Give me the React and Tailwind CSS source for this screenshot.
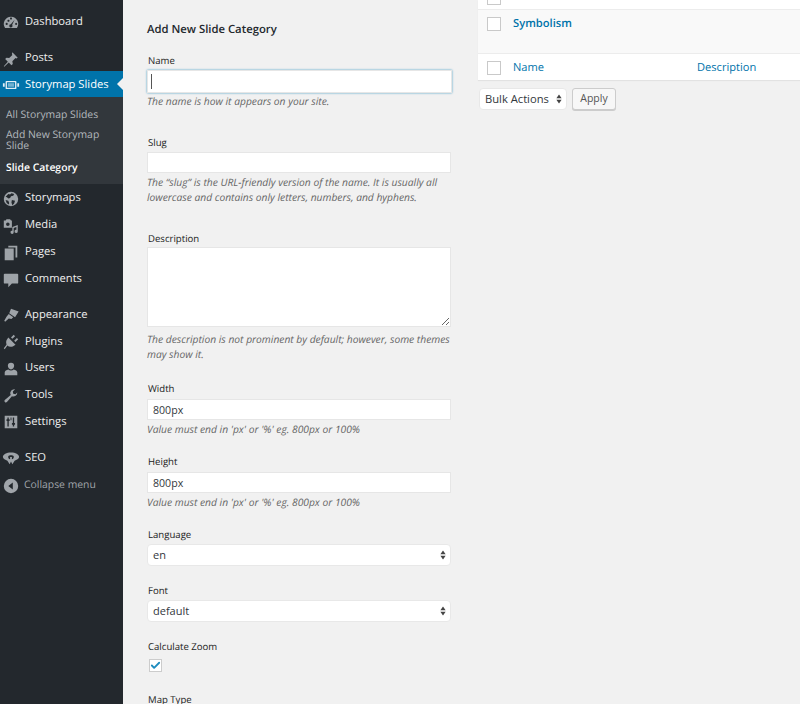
import { Check } from 'lucide-react'

const FONT = "font-['Open_Sans',sans-serif] [text-rendering:geometricPrecision]"

// hand drawn, dashicons are not in any of the icon packs
const ICONS = {
  dashboard: <path fillRule="evenodd" d="M10 3a8 8 0 0 0-6.6 12.5h13.2A8 8 0 0 0 10 3zM6 7.5a1.2 1.2 0 1 1 0 .01zM9 5.5a1.1 1.1 0 1 1 2 0 1.1 1.1 0 0 1-2 0zM4 11a1.2 1.2 0 1 1 2.4 0A1.2 1.2 0 0 1 4 11zm10-4.5L11.3 12a1.8 1.8 0 1 1-1.5-.7zM14.5 11a1.2 1.2 0 1 1 0 .01z" />,
  pin: <path d="M11.5 2.5l6 6-1.5 1-1-.5-3.5 3.5.5 3-1.5 1.5-3-3-5 4.5-.5-.5 4.5-5-3-3L5 8.5l3 .5 3.5-3.5-.5-1z" />,
  slides: (
    <>
      <path fillRule="evenodd" d="M5 5.500h10a1 1 0 0 1 1 1v7a1 1 0 0 1-1 1H5a1 1 0 0 1-1-1v-7a1 1 0 0 1 1-1zm.5 1.500v6h9V7zM1 8h2v4H1zm16 0h2v4h-2z" />
      <rect x="6.500" y="8" width="7" height="4" opacity="0.5" />
    </>
  ),
  globe: <path fillRule="evenodd" d="M10 2a8 8 0 1 0 0 16 8 8 0 0 0 0-16zM7 4.5l2 .5 1.5-1.5 3 1-1 2-2.500.5-1 2-2 .5-1.500-1.500L4 7.500zM11 11l3.500 1-1 3-2 2-1-3zM4 11l3 1 1 2.500-.5 1.500A6.500 6.500 0 0 1 4 11z" />,
  media: <path fillRule="evenodd" d="M2 4h2l1-1.500h4L10 4h1v8H2zM6.500 6a2 2 0 1 0 0 4 2 2 0 0 0 0-4zM17.500 9v7a1.800 1.800 0 1 1-1.500-1.800v-3l-3 1V17a1.800 1.800 0 1 1-1.500-1.800V11z" />,
  pages: <path d="M7 2h10v13h-2V4H7zM3 5h10v13H3z" />,
  comments: <path d="M3 3h14a1 1 0 0 1 1 1v9a1 1 0 0 1-1 1h-6l-4 4v-4H3a1 1 0 0 1-1-1V4a1 1 0 0 1 1-1z" />,
  appearance: <path d="M10 3l8.500 3-4 6.500-6.500-4.500zM7.500 9l5 3.500-2 2-3-.5-4 3.500-1-1 2.500-4.500z" />,
  plugins: <path d="M7 5l8 8-3 2q-4 1-6-1l-3 4-1-1 3-4q-1-3 0-5zM10 5l3-3 1.500 1.500-3 3zM13.500 8.500l3-3L18 7l-3 3z" />,
  users: <path fillRule="evenodd" d="M10 3a3.500 3.500 0 0 1 3.500 3.500c0 2-1.500 4-3.500 4s-3.500-2-3.500-4A3.500 3.500 0 0 1 10 3zM7 10.500c1.500 1.500 4.500 1.500 6 0 2 .5 4 1.500 4 3.500v3H3v-3c0-2 2-3 4-3.500z" />,
  tools: <path d="M17 6a4.500 4.500 0 0 1-6 4.300L5.500 16.800a1.700 1.700 0 0 1-2.400-2.400L9.700 9A4.500 4.500 0 0 1 14.500 2.500l-2.500 2.500.5 2.500 2.500.5 2.500-2.500z" />,
  settings: <path fillRule="evenodd" d="M3 3h14v14H3zm3 2v2H5v2h1v6h1.500V9h1V7h-1V5zm6 0v6h-1v2h1v2h1.500v-2h1v-2h-1V5zM9.500 5v3h1V5z" />,
  seo: <path fillRule="evenodd" d="M10 4c5 0 9 2 9 5 0 2-3 3.500-5 4l-2.500 4L10 14l-1.500 3L6 13c-2-.5-5-2-5-4 0-3 4-5 9-5zM7 8c-.5 1.500.500 3 2 3.500V9h2v2.500c1.500-.5 2.500-2 2-3.500-1-1.500-5-1.500-6 0z" />,
  collapse: <path fillRule="evenodd" d="M10 2a8 8 0 1 1 0 16 8 8 0 0 1 0-16zm2 4L7 10l5 4z" />,
}

function MenuIcon({ name, color = 'text-[#9ea3a8]' }) {
  return (
    <svg viewBox="0 0 20 20" fill="currentColor" className={`size-[18px] shrink-0 ${color}`}>
      {ICONS[name]}
    </svg>
  )
}

function MenuItem({ icon, label, height = 'h-[27px]' }) {
  return (
    <a className={`flex ${height} items-center gap-[5px] pl-[2px] pt-[2px] text-[11.2px] text-[#eeeeee]`}>
      <MenuIcon name={icon} />
      <span>{label}</span>
    </a>
  )
}

function Sidebar() {
  return (
    <aside className="relative w-[123px] shrink-0 bg-[#23282d] pt-[8px]">
      <MenuItem icon="dashboard" label="Dashboard" />
      <div className="mt-[9px]">
        <MenuItem icon="pin" label="Posts" />
      </div>
      <div className="relative flex h-[26px] items-center gap-[5px] bg-[#0073aa] pl-[2px] pt-[2px] text-[11.2px] text-white">
        <MenuIcon name="slides" color="text-[#e4eff5]" />
        <span className="whitespace-nowrap">Storymap Slides</span>
        <span className="absolute right-0 top-[7px] border-y-[6px] border-r-[6px] border-y-transparent border-r-[#f1f1f1]" />
      </div>
      <div className="flex h-[87px] flex-col bg-[#32373c] px-[6px] pt-[11px] text-[10.4px] leading-[12px] text-[#b4b9be]">
        <a className="mb-[9px] mt-px">All Storymap Slides</a>
        <a className="mb-[10px] leading-[11px]">Add New Storymap Slide</a>
        <a className="font-semibold text-white">Slide Category</a>
      </div>
      <MenuItem icon="globe" label="Storymaps" />
      <MenuItem icon="media" label="Media" />
      <MenuItem icon="pages" label="Pages" />
      <MenuItem icon="comments" label="Comments" />
      <div className="mt-[9px]">
        <MenuItem icon="appearance" label="Appearance" height="h-[26.75px]" />
        <MenuItem icon="plugins" label="Plugins" height="h-[26.75px]" />
        <MenuItem icon="users" label="Users" height="h-[26.75px]" />
        <MenuItem icon="tools" label="Tools" height="h-[26.75px]" />
        <MenuItem icon="settings" label="Settings" height="h-[26.75px]" />
      </div>
      <div className="mt-[9px]">
        <MenuItem icon="seo" label="SEO" />
      </div>
      <a className="flex h-[27px] items-center gap-[4px] pl-[2px] pt-[3px] text-[10.4px] text-[#a0a5aa]">
        <MenuIcon name="collapse" color="text-[#a0a5aa]" />
        <span>Collapse menu</span>
      </a>
    </aside>
  )
}

const inputClass = 'block w-[304px] border border-[#e6e6e6] bg-white px-[5px] text-[10.6px] text-[#32373c] outline-none'

function Label({ children, className = '' }) {
  return <label className={`-mb-[2px] block pl-px text-[9.6px] leading-[18px] text-[#222] ${className}`}>{children}</label>
}

function Help({ children, className = '' }) {
  return <p className={`text-[10.25px] italic leading-[15px] text-[#666] ${className}`}>{children}</p>
}

function Dropdown({ value }) {
  return (
    <div className="relative mt-[2px] w-[304px]">
      <select
        defaultValue={value}
        className="block h-[22px] w-full appearance-none rounded-[4px] border border-[#e8e8e8] bg-white pl-[5px] text-[11px] text-[#32373c] outline-none"
      >
        <option>{value}</option>
      </select>
      <svg viewBox="0 0 8 12" fill="#444" className="absolute right-[5px] top-[6px] h-[10px] w-[6px]">
        <path d="M4 0l3.500 5h-7zM4 12L.5 7h7z" />
      </svg>
    </div>
  )
}

function AddForm() {
  return (
    <section className="w-[331px] shrink-0 pl-[24px] pt-[21px]">
      <h2 className="text-[11.3px] font-semibold leading-[18px] text-[#23282d]">Add New Slide Category</h2>

      <Label className="mt-[13px]">Name</Label>
      <div className="relative mt-[2px] w-[305px]">
        <input
          type="text"
          className={`${inputClass} h-[23px] w-full border-[#7ab4dc] shadow-[0_0_2px_rgba(30,140,190,0.8)]`}
        />
        <span className="absolute left-[4px] top-[4px] h-[15px] w-px bg-[#555]" />
      </div>
      <Help className="mt-[2px]">The name is how it appears on your site.</Help>

      <Label className="mt-[24px]">Slug</Label>
      <input type="text" className={`${inputClass} mt-[2px] h-[21px]`} />
      <Help className="mt-[3px]">The “slug” is the URL-friendly version of the name. It is usually all lowercase and contains only letters, numbers, and hyphens.</Help>

      <Label className="mt-[24px]">Description</Label>
      <textarea className={`${inputClass} mt-[1px] h-[80px] resize-y`} />
      <Help className="mt-[6px]">The description is not prominent by default; however, some themes may show it.</Help>

      <Label className="mt-[17px]">Width</Label>
      <input type="text" defaultValue="800px" className={`${inputClass} mt-[3px] h-[21px]`} />
      <Help className="mt-[3px]">Value must end in 'px' or '%' eg. 800px or 100%</Help>

      <Label className="mt-[15px]">Height</Label>
      <input type="text" defaultValue="800px" className={`${inputClass} mt-[3px] h-[21px]`} />
      <Help className="mt-[3px]">Value must end in 'px' or '%' eg. 800px or 100%</Help>

      <Label className="mt-[15px]">Language</Label>
      <Dropdown value="en" />

      <Label className="mt-[16px]">Font</Label>
      <Dropdown value="default" />

      <Label className="mt-[16px]">Calculate Zoom</Label>
      <span className="ml-[2px] mt-[5px] flex size-[13px] items-center justify-center border border-[#cccccc] bg-white">
        <Check className="size-[11px] text-[#1e8cbe]" strokeWidth={4} />
      </span>

      <Label className="mt-[19px]">Map Type</Label>
    </section>
  )
}

function RowCheckbox() {
  return <span className="block size-[14px] shrink-0 border border-[#c9c9c9] bg-white" />
}

function CategoryTable() {
  return (
    <section className="min-w-0 flex-1 pl-[24px]">
      <div className="bg-white shadow-[0_1px_1px_rgba(0,0,0,0.06)]">
        <div className="h-[9px] overflow-hidden pl-[9px]">
          <span className="-mt-[9px] block">
            <RowCheckbox />
          </span>
        </div>
        <div className="flex h-[45px] gap-[12px] border-y border-[#ececec] bg-[#f9f9f9] pl-[9px] pt-[6px]">
          <span className="mt-px"><RowCheckbox /></span>
          <a className="text-[11.2px] font-semibold leading-[15px] text-[#0073aa]">Symbolism</a>
        </div>
        <div className="flex h-[26px] items-center pl-[9px] pt-px text-[11.1px] text-[#0073aa]">
          <RowCheckbox />
          <a className="ml-[12px] w-[184px] pt-px">Name</a>
          <a className="pt-px">Description</a>
        </div>
      </div>
      <div className="mt-[8px] flex gap-[5px] pl-px">
        <div className="relative w-[88px]">
          <select
            defaultValue="Bulk Actions"
            className="block h-[22px] w-full appearance-none rounded-[4px] border border-[#e8e8e8] bg-white pl-[5px] text-[11.2px] text-[#32373c] outline-none"
          >
            <option>Bulk Actions</option>
          </select>
          <svg viewBox="0 0 8 12" fill="#444" className="absolute right-[5px] top-[6px] h-[10px] w-[6px]">
            <path d="M4 0l3.500 5h-7zM4 12L.5 7h7z" />
          </svg>
        </div>
        <button type="button" className="h-[22px] w-[44px] rounded-[3px] border border-[#cccccc] bg-[#f7f7f7] text-[10.5px] text-[#555] shadow-[0_1px_0_#cccccc]">
          Apply
        </button>
      </div>
    </section>
  )
}

export default function App() {
  return (
    <div className={`flex h-[704px] w-[800px] overflow-hidden bg-[#f1f1f1] ${FONT}`}>
      <Sidebar />
      <AddForm />
      <CategoryTable />
    </div>
  )
}
